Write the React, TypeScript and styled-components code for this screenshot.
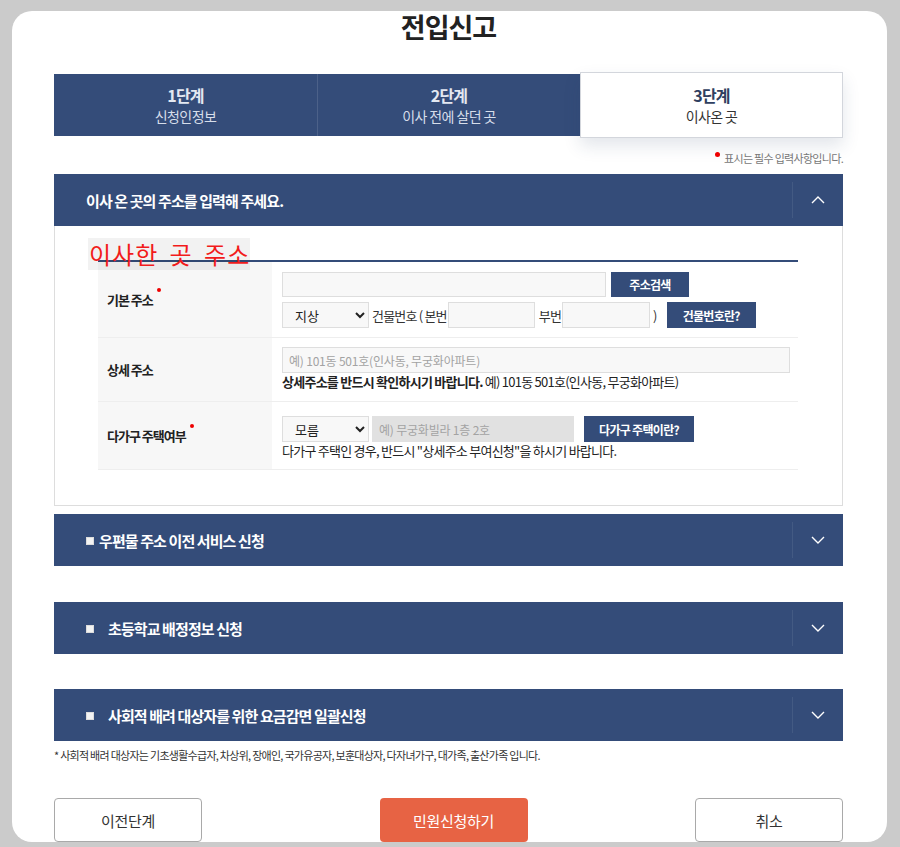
import React from "react";
import styled, { createGlobalStyle, css } from "styled-components";

const NAVY = "#344c79";
const FONT = `"Noto Sans CJK KR", "Noto Sans", sans-serif`;

const GlobalStyle = createGlobalStyle`
  html, body {
    margin: 0;
    padding: 0;
    background: #cbcbcb;
  }
  body {
    font-family: ${FONT};
    color: #222;
  }
  * {
    box-sizing: border-box;
  }
`;

const Page = styled.div`
  height: 847px;
  padding: 12px 0 0 12px;
  overflow: hidden;
`;

const Card = styled.div`
  width: 875px;
  background: #fff;
  border-radius: 20px;
  padding: 0 44px 0 42px;
`;

const Title = styled.h1`
  margin: -1px 0 0;
  text-align: center;
  font-size: 27px;
  line-height: 32px;
  font-weight: 700;
  letter-spacing: -1px;
  color: #222;
`;

const Steps = styled.div`
  display: grid;
  grid-template-columns: repeat(3, 1fr);
  height: 62px;
  margin-top: 31px;
  background: ${NAVY};
`;

const Step = styled.div<{ $active?: boolean }>`
  display: flex;
  flex-direction: column;
  align-items: center;
  justify-content: center;
  border-left: 1px solid rgba(255, 255, 255, 0.12);
  &:first-child {
    border-left: none;
  }
  strong {
    font-size: 16px;
    line-height: 22px;
    font-weight: 700;
    letter-spacing: -0.8px;
    color: #e3e8f1;
  }
  span {
    font-size: 14px;
    line-height: 21px;
    letter-spacing: -0.6px;
    color: #d7deea;
  }
  ${(p) =>
    p.$active &&
    css`
      background: #fff;
      margin: -2px 0;
      border: 1px solid #d3d6dc;
      box-shadow: 0 8px 16px rgba(40, 60, 100, 0.13);
      strong {
        color: #2f3f60;
      }
      span {
        color: #333;
      }
    `}
`;

const RequiredNote = styled.p`
  margin: 14px 0 0;
  text-align: right;
  font-size: 11px;
  line-height: 16px;
  letter-spacing: -0.7px;
  color: #777;
`;

const RedDot = styled.i`
  display: inline-block;
  width: 5px;
  height: 5px;
  border-radius: 50%;
  background: #e00;
  margin-right: 4px;
  vertical-align: 6px;
`;

const Panel = styled.section<{ $gap: number }>`
  margin-top: ${(p) => p.$gap}px;
`;

const PanelHead = styled.div`
  display: flex;
  align-items: center;
  height: 52px;
  background: ${NAVY};
  color: #fff;
`;

const PanelTitle = styled.div`
  flex: 1;
  display: flex;
  align-items: center;
  padding-left: 32px;
  font-size: 15px;
  font-weight: 700;
  letter-spacing: -0.9px;
`;

const Check = styled.span<{ $gap: number }>`
  display: inline-block;
  width: 8px;
  height: 8px;
  background: #f3f3f3;
  border: 1px solid #dcdcdc;
  margin-right: ${(p) => p.$gap}px;
  margin-top: 2px;
`;

const Toggle = styled.div`
  width: 51px;
  height: 36px;
  border-left: 1px solid rgba(255, 255, 255, 0.08);
  display: flex;
  align-items: center;
  justify-content: center;
`;

const PanelBody = styled.div`
  position: relative;
  border: 1px solid #ddd;
  border-top: none;
  padding: 0 44px 35px 43px;
`;

const SectionLine = styled.div`
  height: 36px;
  border-bottom: 2px solid ${NAVY};
`;

const Annotation = styled.div`
  position: absolute;
  left: 33px;
  top: 12px;
  width: 162px;
  height: 32px;
  padding-left: 1px;
  background: rgba(0, 0, 0, 0.05);
  color: #f21b1b;
  font-size: 24px;
  line-height: 31px;
  letter-spacing: 1px;
  word-spacing: 5px;
  white-space: nowrap;
`;

const FormTable = styled.div`
  display: grid;
  grid-template-columns: 174px 1fr;
`;

const Label = styled.div`
  display: flex;
  align-items: center;
  padding-left: 9px;
  background: #f7f7f7;
  border-bottom: 1px solid #eee;
  font-size: 13px;
  font-weight: 700;
  letter-spacing: -1px;
  color: #222;
`;

const Req = styled.i`
  display: inline-block;
  width: 4px;
  height: 4px;
  border-radius: 50%;
  background: #e00;
  margin-left: 4px;
  align-self: flex-start;
  margin-top: -12px;
  position: relative;
  top: 50%;
`;

const Field = styled.div<{ $pt: number; $pb: number }>`
  display: flex;
  flex-direction: column;
  gap: 5px;
  padding: ${(p) => p.$pt}px 8px ${(p) => p.$pb}px 10px;
  border-bottom: 1px solid #eee;
`;

const FieldLine = styled.div`
  display: flex;
  align-items: center;
`;

const TextInput = styled.input<{ $w: number; $h?: number; $ml?: number }>`
  width: ${(p) => p.$w}px;
  height: ${(p) => p.$h ?? 26}px;
  margin-left: ${(p) => p.$ml ?? 0}px;
  padding: 0 6px;
  border: 1px solid #dedede;
  background: #f8f8f8;
  font-family: ${FONT};
  font-size: 12px;
  letter-spacing: -0.2px;
  color: #555;
  outline: none;
  &::placeholder {
    color: #a3a3a3;
  }
  &:disabled {
    background: #e1e1e1;
    border-color: #e1e1e1;
  }
`;

const Select = styled.select`
  width: 87px;
  height: 26px;
  padding: 0 0 0 8px;
  border: 1px solid #dedede;
  border-radius: 0;
  background: #f8f8f8;
  font-family: ${FONT};
  font-size: 13px;
  color: #222;
`;

const NavyButton = styled.button<{ $w: number; $h?: number; $ml: number }>`
  width: ${(p) => p.$w}px;
  height: ${(p) => p.$h ?? 26}px;
  margin-left: ${(p) => p.$ml}px;
  padding: 0;
  border: none;
  background: ${NAVY};
  color: #fff;
  font-family: ${FONT};
  font-size: 12px;
  font-weight: 700;
  letter-spacing: -0.7px;
`;

const InlineText = styled.span<{ $ml?: number }>`
  margin-left: ${(p) => p.$ml ?? 0}px;
  font-size: 13px;
  letter-spacing: -0.8px;
  color: #333;
  white-space: pre;
`;

const Help = styled.p`
  margin: -5px 0 0;
  font-size: 13px;
  line-height: 18px;
  letter-spacing: -0.75px;
  color: #222;
  b {
    font-weight: 700;
  }
`;

const FootNote = styled.p`
  margin: 6px 0 0;
  font-size: 11px;
  line-height: 16px;
  letter-spacing: -0.72px;
  color: #333;
`;

const Actions = styled.div`
  display: flex;
  justify-content: space-between;
  margin: 35px 0 -8px;
`;

const ActionButton = styled.button<{ $primary?: boolean }>`
  width: 148px;
  height: 44px;
  border-radius: 4px;
  font-family: ${FONT};
  font-size: 15px;
  letter-spacing: -0.3px;
  border: 1px solid #a9a9a9;
  background: rgba(255, 255, 255, 0.2);
  color: #333;
  ${(p) =>
    p.$primary &&
    css`
      margin-left: 10px;
      border: none;
      background: rgba(228, 82, 48, 0.9);
      color: #fff;
    `}
`;

const Chevron = ({ up }: { up?: boolean }) => (
  <svg width="14" height="8" viewBox="0 0 14 8">
    <polyline
      points={up ? "1,7 7,1 13,7" : "1,1 7,7 13,1"}
      fill="none"
      stroke="#fff"
      strokeWidth="1.4"
    />
  </svg>
);

const CollapsedPanel = ({ title, gap, checkGap }: { title: string; gap: number; checkGap: number }) => (
  <Panel $gap={gap}>
    <PanelHead>
      <PanelTitle>
        <Check $gap={checkGap} />
        {title}
      </PanelTitle>
      <Toggle>
        <Chevron />
      </Toggle>
    </PanelHead>
  </Panel>
);

export default function App() {
  return (
    <Page>
      <GlobalStyle />
      <Card>
        <Title>전입신고</Title>
        <Steps>
          <Step>
            <strong>1단계</strong>
            <span>신청인정보</span>
          </Step>
          <Step>
            <strong>2단계</strong>
            <span>이사 전에 살던 곳</span>
          </Step>
          <Step $active>
            <strong>3단계</strong>
            <span>이사온 곳</span>
          </Step>
        </Steps>
        <RequiredNote>
          <RedDot />
          표시는 필수 입력사항입니다.
        </RequiredNote>

        <Panel $gap={8}>
          <PanelHead>
            <PanelTitle>이사 온 곳의 주소를 입력해 주세요.</PanelTitle>
            <Toggle>
              <Chevron up />
            </Toggle>
          </PanelHead>
          <PanelBody>
            <SectionLine />
            <Annotation>이사한 곳 주소</Annotation>
            <FormTable>
              <Label>
                기본 주소
                <Req />
              </Label>
              <Field $pt={10} $pb={9}>
                <FieldLine>
                  <TextInput $w={324} $h={25} />
                  <NavyButton $w={78} $h={25} $ml={5}>
                    주소검색
                  </NavyButton>
                </FieldLine>
                <FieldLine>
                  <Select defaultValue="지상">
                    <option>지상</option>
                    <option>지하</option>
                  </Select>
                  <InlineText $ml={3}>건물번호 ( 본번</InlineText>
                  <TextInput $w={87} $ml={1} />
                  <InlineText $ml={4}>부번</InlineText>
                  <TextInput $w={88} $ml={1} />
                  <InlineText $ml={3}>)</InlineText>
                  <NavyButton $w={89} $ml={10}>
                    건물번호란?
                  </NavyButton>
                </FieldLine>
              </Field>

              <Label>상세 주소</Label>
              <Field $pt={9} $pb={10}>
                <FieldLine>
                  <TextInput $w={508} placeholder="예) 101동 501호(인사동, 무궁화아파트)" />
                </FieldLine>
                <Help>
                  <b>상세주소를 반드시 확인하시기 바랍니다.</b> 예) 101동 501호(인사동, 무궁화아파트)
                </Help>
              </Field>

              <Label>
                다가구 주택여부
                <Req />
              </Label>
              <Field $pt={14} $pb={9}>
                <FieldLine>
                  <Select defaultValue="모름">
                    <option>모름</option>
                    <option>예</option>
                    <option>아니오</option>
                  </Select>
                  <TextInput $w={202} $ml={3} disabled placeholder="예) 무궁화빌라 1층 2호" />
                  <NavyButton $w={110} $ml={10}>
                    다가구 주택이란?
                  </NavyButton>
                </FieldLine>
                <Help>다가구 주택인 경우, 반드시 "상세주소 부여신청"을 하시기 바랍니다.</Help>
              </Field>
            </FormTable>
          </PanelBody>
        </Panel>

        <CollapsedPanel title="우편물 주소 이전 서비스 신청" gap={8} checkGap={5} />
        <CollapsedPanel title="초등학교 배정정보 신청" gap={36} checkGap={14} />
        <CollapsedPanel title="사회적 배려 대상자를 위한 요금감면 일괄신청" gap={35} checkGap={14} />

        <FootNote>
          * 사회적 배려 대상자는 기초생활수급자, 차상위, 장애인, 국가유공자, 보훈대상자, 다자녀가구, 대가족, 출산가족 입니다.
        </FootNote>

        <Actions>
          <ActionButton>이전단계</ActionButton>
          <ActionButton $primary>민원신청하기</ActionButton>
          <ActionButton>취소</ActionButton>
        </Actions>
      </Card>
    </Page>
  );
}
